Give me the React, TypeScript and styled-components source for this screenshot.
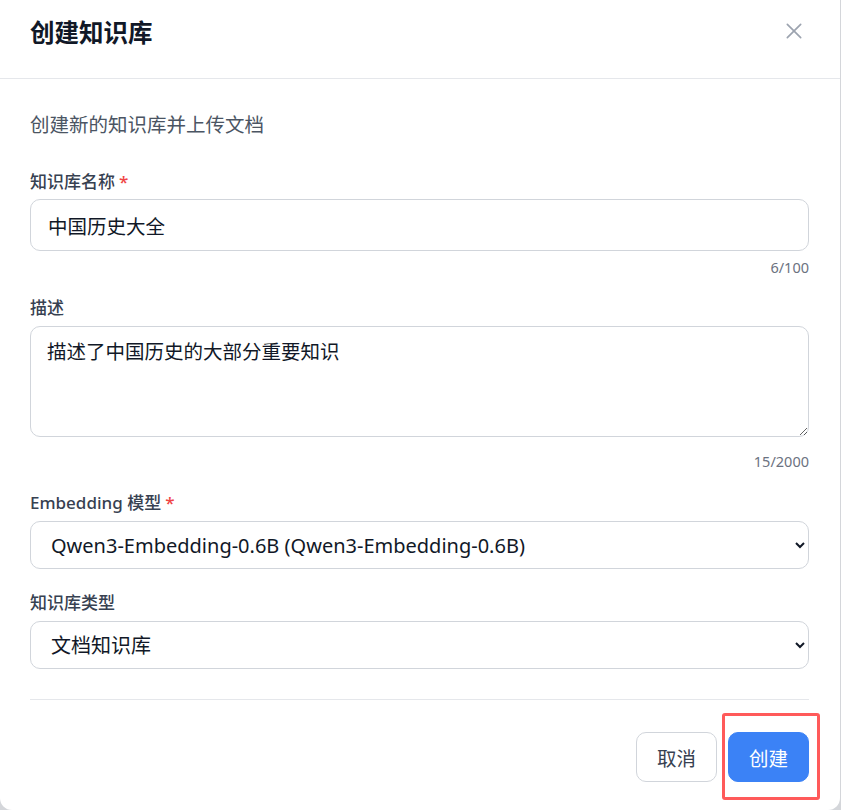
import React from "react";
import styled, { createGlobalStyle } from "styled-components";

const GlobalStyle = createGlobalStyle`
  html, body {
    margin: 0;
    padding: 0;
    background: #d4d6da;
    font-family: "Noto Sans", "Noto Sans CJK SC", sans-serif;
  }
  * { box-sizing: border-box; }
`;

const Modal = styled.div`
  width: 840px;
  background: #ffffff;
  border-radius: 0 0 12px 12px;
  display: flex;
  flex-direction: column;
`;

const Header = styled.div`
  height: 79px;
  padding: 15px 36px 0 30px;
  display: flex;
  justify-content: space-between;
  align-items: flex-start;
  border-bottom: 1px solid #e5e7eb;
`;

const Title = styled.h2`
  margin: 0;
  font-size: 24.5px;
  line-height: 34px;
  font-weight: 700;
  color: #111827;
  font-family: "Noto Sans CJK SC", sans-serif;
`;

const CloseButton = styled.button`
  border: none;
  background: transparent;
  padding: 0;
  margin-top: 6px;
  width: 20px;
  height: 20px;
  display: flex;
  align-items: center;
  justify-content: center;
  color: #9ca3af;
  cursor: pointer;
`;

const Body = styled.div`
  padding: 32px 31px 28px 30px;
  display: flex;
  flex-direction: column;
`;

const Subtitle = styled.p`
  margin: 0 0 31px;
  font-size: 19.5px;
  line-height: 28px;
  color: #4b5563;
`;

const Label = styled.label<{ $top?: number }>`
  display: block;
  margin-top: ${(p) => p.$top ?? 0}px;
  font-size: 17px;
  line-height: 24px;
  color: #374151;
  font-weight: 500;
`;

const Required = styled.span`
  color: #ef4444;
  margin-left: 4px;
`;

const TextInput = styled.input`
  display: block;
  width: 100%;
  height: 52px;
  margin-top: 5px;
  padding: 0 17px;
  border: 1px solid #d1d5db;
  border-radius: 10px;
  font-family: "Noto Sans", "Noto Sans CJK SC", sans-serif;
  font-size: 19.5px;
  color: #111827;
  outline: none;
  background: #fff;
`;

const TextArea = styled.textarea`
  display: block;
  width: 100%;
  height: 111px;
  margin-top: 6px;
  padding: 12px 16px;
  border: 1px solid #d1d5db;
  border-radius: 10px;
  font-family: "Noto Sans", "Noto Sans CJK SC", sans-serif;
  font-size: 19.5px;
  line-height: 26px;
  color: #111827;
  outline: none;
  resize: vertical;
  background: #fff;
`;

const Counter = styled.div<{ $top: number }>`
  margin-top: ${(p) => p.$top}px;
  text-align: right;
  font-size: 14.5px;
  line-height: 20px;
  color: #6b7280;
`;

const Select = styled.select`
  display: block;
  width: 100%;
  height: 48px;
  margin-top: 6px;
  padding: 0 12px 0 16px;
  border: 1px solid #d1d5db;
  border-radius: 10px;
  font-family: "Noto Sans", "Noto Sans CJK SC", sans-serif;
  font-size: 20px;
  color: #111827;
  background: #fff;
  outline: none;
`;

const Divider = styled.hr`
  margin: 30px 0 0;
  border: none;
  border-top: 1px solid #e5e7eb;
`;

const Footer = styled.div`
  margin-top: 32px;
  display: flex;
  justify-content: flex-end;
  gap: 11px;
`;

const Button = styled.button<{ $primary?: boolean }>`
  height: 50px;
  padding: 0 20px;
  border-radius: 10px;
  font-family: "Noto Sans CJK SC", sans-serif;
  font-size: 19.5px;
  cursor: pointer;
  border: 1px solid ${(p) => (p.$primary ? "#3b82f6" : "#d1d5db")};
  background: ${(p) => (p.$primary ? "#3b82f6" : "#ffffff")};
  color: ${(p) => (p.$primary ? "#ffffff" : "#374151")};
`;

const HighlightWrap = styled.div`
  position: relative;
`;

const Highlight = styled.div`
  position: absolute;
  left: -6px;
  top: -19px;
  width: 98px;
  height: 87px;
  border: 3px solid #ff5a5a;
  border-radius: 3px;
  pointer-events: none;
`;

export default function App() {
  return (
    <>
      <GlobalStyle />
      <Modal>
        <Header>
          <Title>创建知识库</Title>
          <CloseButton aria-label="关闭">
            <svg width="20" height="20" viewBox="0 0 24 24" fill="none" stroke="currentColor" strokeWidth="2" strokeLinecap="round">
              <path d="M4 4L20 20M20 4L4 20" />
            </svg>
          </CloseButton>
        </Header>
        <Body>
          <Subtitle>创建新的知识库并上传文档</Subtitle>
          <Label>
            知识库名称<Required>*</Required>
          </Label>
          <TextInput defaultValue="中国历史大全" />
          <Counter $top={6}>6/100</Counter>
          <Label $top={19}>描述</Label>
          <TextArea defaultValue="描述了中国历史的大部分重要知识" />
          <Counter $top={14}>15/2000</Counter>
          <Label $top={20}>
            Embedding 模型<Required>*</Required>
          </Label>
          <Select defaultValue="qwen">
            <option value="qwen">Qwen3-Embedding-0.6B (Qwen3-Embedding-0.6B)</option>
          </Select>
          <Label $top={22}>知识库类型</Label>
          <Select defaultValue="doc">
            <option value="doc">文档知识库</option>
          </Select>
          <Divider />
          <Footer>
            <Button>取消</Button>
            <HighlightWrap>
              <Button $primary>创建</Button>
              <Highlight />
            </HighlightWrap>
          </Footer>
        </Body>
      </Modal>
    </>
  );
}
